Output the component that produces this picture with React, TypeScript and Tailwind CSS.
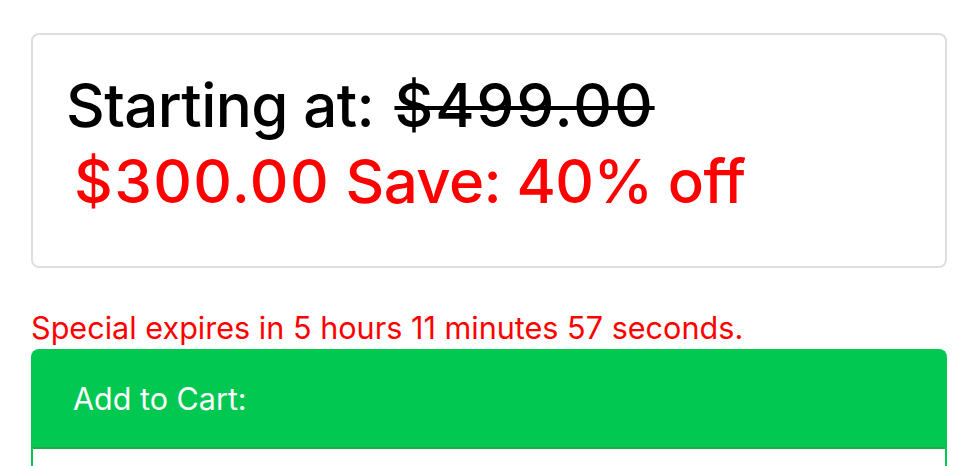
export default function App() {
  return (
    <div className="w-[964px] h-[466px] overflow-hidden bg-white pl-[31px] pr-[17px] pt-[33px]" style={{ fontFamily: 'Inter, "Noto Sans", sans-serif' }}>
      <div className="border-2 border-[#dedede] rounded-[8px] h-[235px] pl-[33px] pt-[32px]">
        <div className="text-[60px] leading-[76px] font-medium text-black tracking-[-0.6px]">
          Starting at: <span className="ml-[5px] line-through decoration-[4px] tracking-[2px]">$499.00</span>
        </div>
        <div className="text-[60px] leading-[76px] font-medium text-[#ff0000] pl-[8px] tracking-[-0.6px]">
          <span className="tracking-[1.4px]">$300.00</span> Save: 40% off
        </div>
      </div>
      <div className="mt-[39px] text-[30.6px] leading-[42px] text-[#ff0000]">Special expires in 5 hours 11 minutes 57 seconds.</div>
      <div className="border-2 border-[#00c851] rounded-t-[8px] border-b-0">
        <div className="bg-[#00c851] h-[98px] border-b-2 border-[#1faa4e] flex items-center pl-[40px] text-white text-[30.5px]">Add to Cart:</div>
        <div className="h-[40px] bg-white"></div>
      </div>
    </div>
  );
}
